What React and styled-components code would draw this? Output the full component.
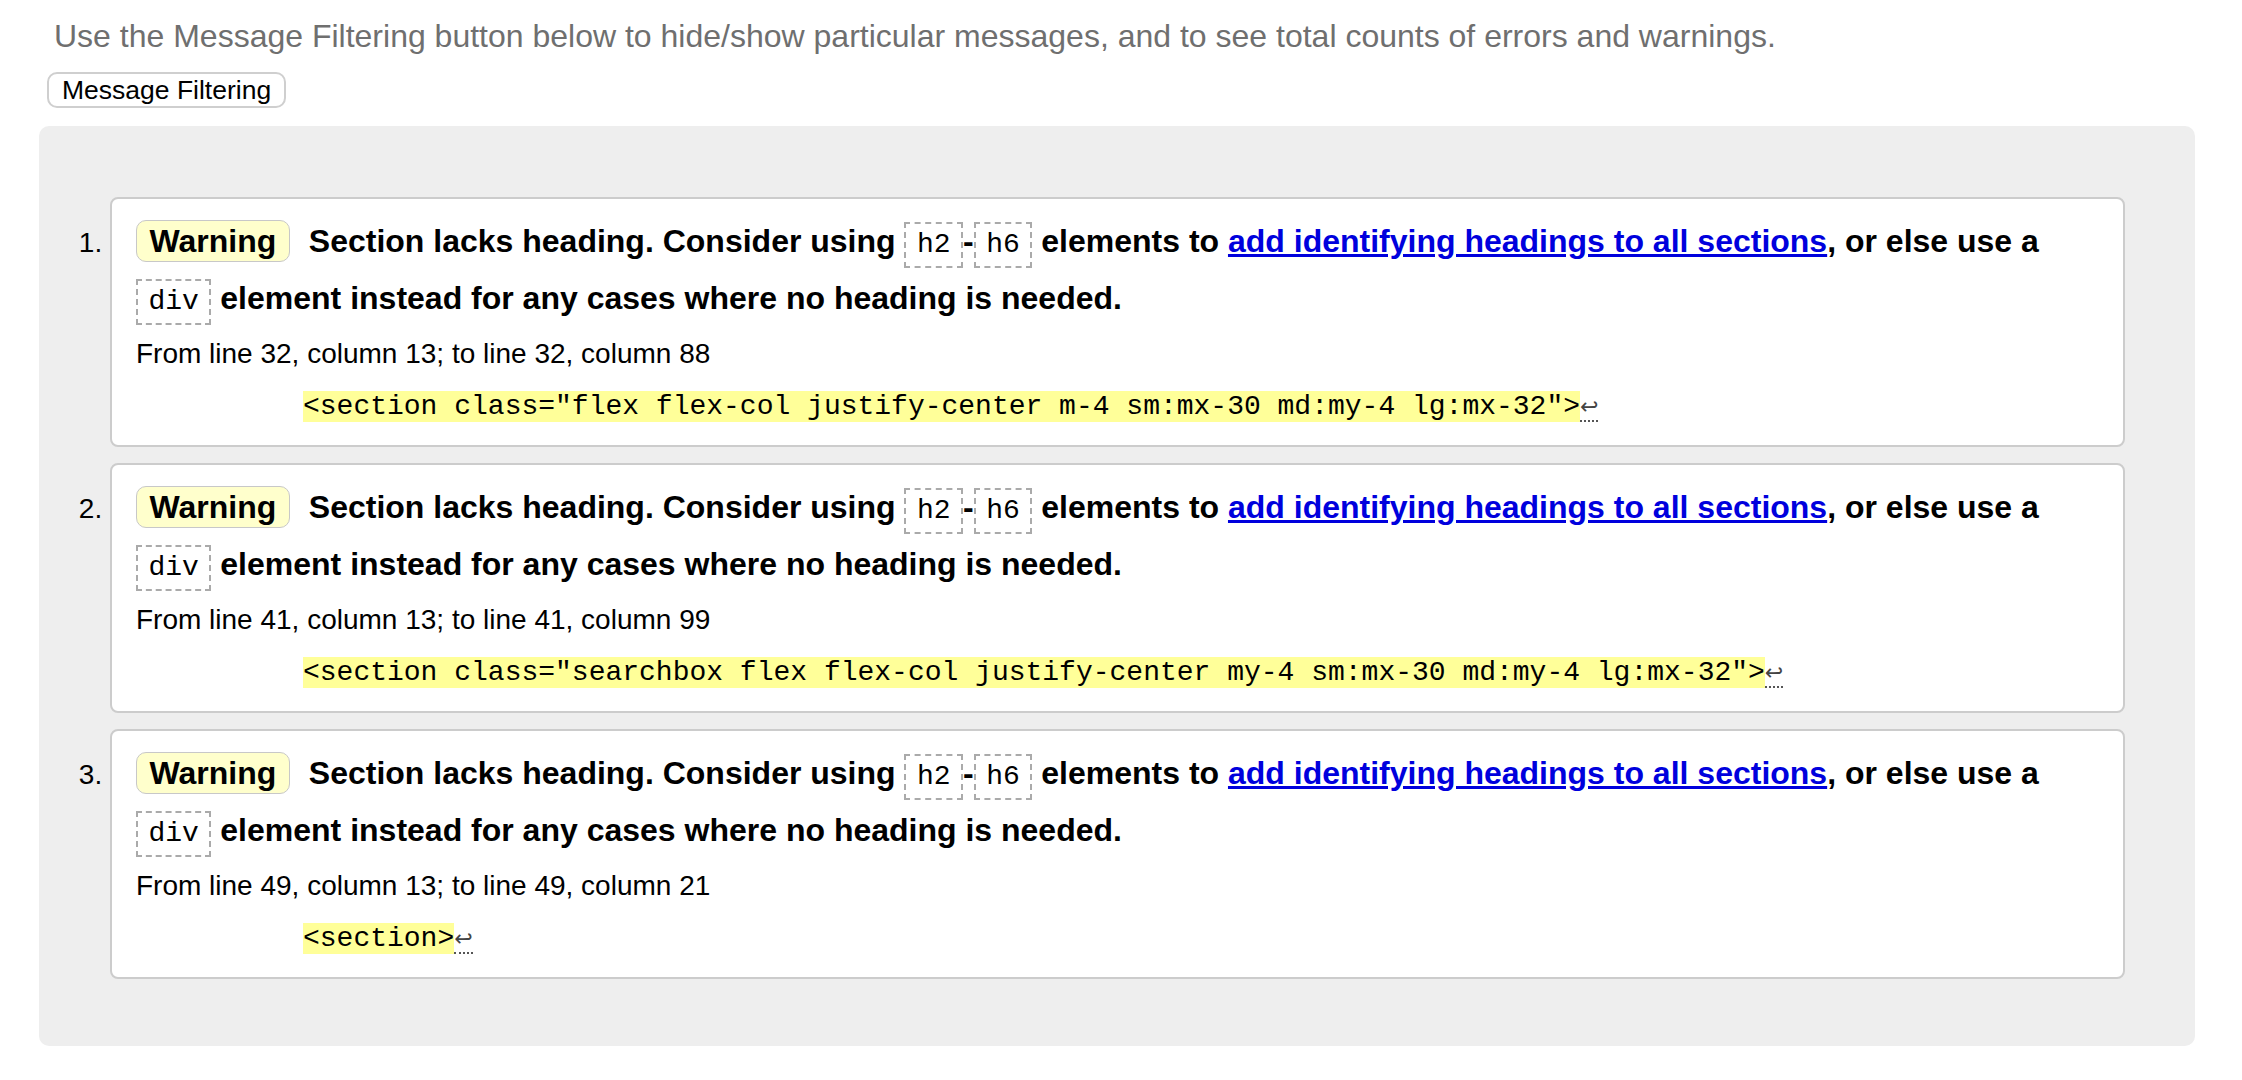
import React from "react";
import styled, { createGlobalStyle } from "styled-components";

const GlobalStyle = createGlobalStyle`
  html, body { margin: 0; padding: 0; background: #fff; }
  body {
    font-family: "Liberation Sans", Arial, Helvetica, sans-serif;
    color: #000;
  }
`;

const Page = styled.div`
  padding: 16px 47px 35px 39px;
`;

const Intro = styled.p`
  margin: 0 0 16px 15px;
  font-size: 32px;
  line-height: 40px;
  color: #6f6f6f;
`;

const FilterButton = styled.button`
  display: block;
  margin: 0 0 18px 8px;
  height: 36px;
  padding: 0 13px;
  font-family: inherit;
  font-size: 26.5px;
  color: #000;
  background: #fff;
  border: 2px solid #cfcfcf;
  border-radius: 10px;
`;

const Panel = styled.div`
  background: #eeeeee;
  border-radius: 10px;
  padding: 71px 70px 67px 0;
`;

const MessageList = styled.ol`
  margin: 0;
  padding: 0 0 0 71px;
  list-style: decimal outside;
  font-size: 28px;
`;

const Message = styled.li`
  background: #fff;
  border: 2px solid #cccccc;
  border-radius: 8px;
  padding: 14px 24px 22px 24px;
  margin-bottom: 16px;
  &:last-child { margin-bottom: 0; }
  &::marker { font-size: 28px; color: #000; }
`;

const Heading = styled.p`
  margin: 0;
  font-size: 32px;
  font-weight: bold;
  line-height: 57px;
`;

const Badge = styled.strong`
  display: inline-block;
  background: #ffffcc;
  border: 1px solid #c8c8c8;
  border-radius: 10px;
  padding: 0 12.5px;
  line-height: 40px;
  margin-right: 19px;
`;

const Code = styled.code`
  display: inline-block;
  font-family: "Liberation Mono", "Courier New", monospace;
  font-size: 28px;
  font-weight: normal;
  line-height: 32px;
  padding: 5px 10.5px;
  border: 2px dashed #aaaaaa;
`;

const Link = styled.a`
  color: #0000dd;
  text-decoration: underline;
`;

const Location = styled.p`
  margin: 10px 0 0;
  font-size: 28px;
  line-height: 33px;
`;

const Extract = styled.p`
  margin: 21px 0 0 167px;
  font-family: "Liberation Mono", "Courier New", monospace;
  font-size: 28px;
  line-height: 32px;
  white-space: pre;
`;

const Highlight = styled.mark`
  background: #ffff99;
  color: #000;
`;

const LineBreak = styled.span`
  font-family: "DejaVu Sans", sans-serif;
  font-size: 22px;
  color: #444;
  border-bottom: 2px dotted #555;
  padding-bottom: 1px;
`;

const messages = [
  {
    from: "From line 32, column 13; to line 32, column 88",
    extract: '<section class="flex flex-col justify-center m-4 sm:mx-30 md:my-4 lg:mx-32">',
  },
  {
    from: "From line 41, column 13; to line 41, column 99",
    extract: '<section class="searchbox flex flex-col justify-center my-4 sm:mx-30 md:my-4 lg:mx-32">',
  },
  {
    from: "From line 49, column 13; to line 49, column 21",
    extract: "<section>",
  },
];

export default function App() {
  return (
    <>
      <GlobalStyle />
      <Page>
        <Intro>
          Use the Message Filtering button below to hide/show particular messages, and to see total counts of errors and warnings.
        </Intro>
        <FilterButton type="button">Message Filtering</FilterButton>
        <Panel>
          <MessageList>
            {messages.map((m, i) => (
              <Message key={i}>
                <Heading>
                  <Badge>Warning</Badge>
                  Section lacks heading. Consider using <Code>h2</Code>-<Code>h6</Code> elements to{" "}
                  <Link href="#">add identifying headings to all sections</Link>, or else use a{" "}
                  <Code>div</Code> element instead for any cases where no heading is needed.
                </Heading>
                <Location>{m.from}</Location>
                <Extract>
                  <Highlight>{m.extract}</Highlight>
                  <LineBreak>↩</LineBreak>
                </Extract>
              </Message>
            ))}
          </MessageList>
        </Panel>
      </Page>
    </>
  );
}
